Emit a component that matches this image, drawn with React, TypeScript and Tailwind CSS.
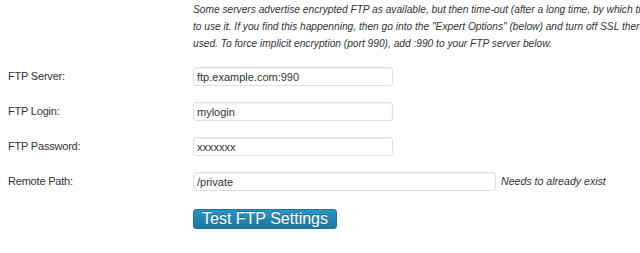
const rows = [
  { label: "FTP Server:", value: "ftp.example.com:990" },
  { label: "FTP Login:", value: "mylogin" },
  { label: "FTP Password:", value: "xxxxxxx", small: true },
];

const inputCls =
  "h-[19px] rounded-[3px] border border-[#dfdfdf] bg-white px-[3px] text-[11px] text-[#333] shadow-[inset_0_1px_2px_rgba(0,0,0,0.07)] outline-none";

export default function App() {
  return (
    <div
      className="w-[640px] h-[253px] overflow-hidden bg-white text-[#333]"
      style={{ fontFamily: '"Liberation Sans", Arial, sans-serif' }}
    >
      <div className="pl-[193px] pt-[1px] text-[10.2px] leading-[17px] italic text-[#333] whitespace-nowrap">
        Some servers advertise encrypted FTP as available, but then time-out
        (after a long time, by which time you have given up) when you try
        <br />
        to use it. If you find this happenning, then go into the "Expert
        Options" (below) and turn off SSL there. Otherwise it will not be
        <br />
        used. To force implicit encryption (port 990), add :990 to your FTP
        server below.
      </div>

      <div className="mt-[15px] flex flex-col gap-[16px]">
        {rows.map((r) => (
          <div key={r.label} className="flex items-center">
            <label className="w-[193px] pl-[8px] text-[11px] tracking-[-0.2px]">
              {r.label}
            </label>
            <input
              readOnly
              value={r.value}
              className={`${inputCls} w-[200px] ${r.small ? "text-[9px]" : ""}`}
            />
          </div>
        ))}
        <div className="flex items-center">
          <label className="w-[193px] pl-[8px] text-[11px] tracking-[-0.2px]">
            Remote Path:
          </label>
          <input readOnly value="/private" className={`${inputCls} w-[303px]`} />
          <span className="ml-[5px] text-[10.6px] italic text-[#333]">
            Needs to already exist
          </span>
        </div>
      </div>

      <div className="pl-[193px] mt-[16px]">
        <button className="h-[20px] w-[144px] rounded-[3px] border border-[#21759b] bg-gradient-to-b from-[#2a95c5] to-[#21759b] text-[16px] leading-[18px] text-white [text-shadow:0_-1px_0_rgba(0,0,0,0.3)]">
          Test FTP Settings
        </button>
      </div>
    </div>
  );
}
